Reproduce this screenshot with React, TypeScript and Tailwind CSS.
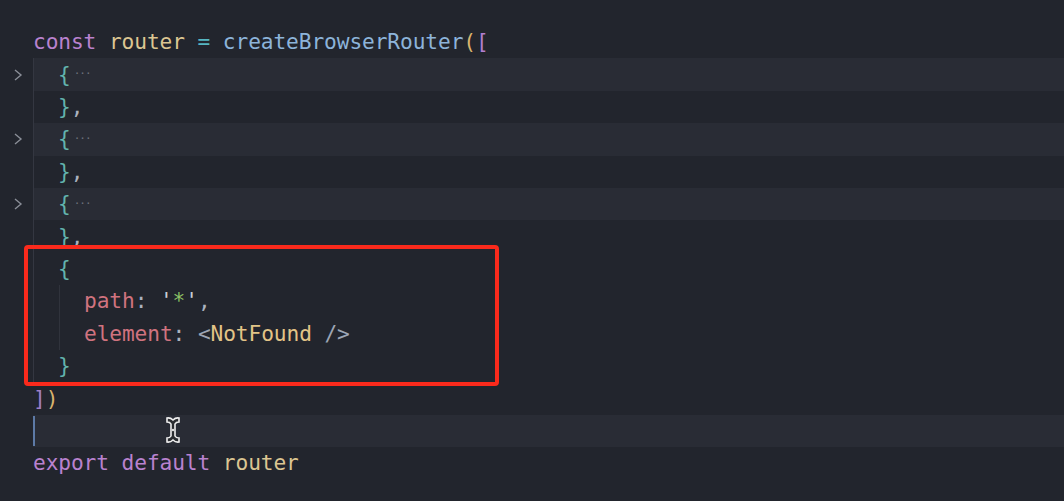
import type { ReactNode } from 'react';

const mono = { fontFamily: '"DejaVu Sans Mono", "Liberation Mono", monospace' };

function Chevron() {
  return (
    <svg width="10" height="14" viewBox="0 0 10 14" className="ml-[13px]">
      <polyline points="2,2 8,7 2,12" fill="none" stroke="#8a8e97" strokeWidth="1.4" />
    </svg>
  );
}

function Row({
  children,
  fold,
  guide,
  band,
}: {
  children?: ReactNode;
  fold?: boolean;
  guide?: boolean;
  band?: boolean;
}) {
  return (
    <div className="flex h-[32.4px] items-stretch">
      <div className="flex w-[33px] shrink-0 items-center">{fold && <Chevron />}</div>
      <div
        className={`flex flex-1 items-center whitespace-pre ${guide ? 'border-l border-[#343741]' : ''} ${
          band ? 'bg-[#292c35]' : ''
        }`}
      >
        {children}
      </div>
    </div>
  );
}

function Folded() {
  return (
    <>
      <span className="pl-[24px] text-[#62b4ae]">{'{'}</span>
      <span className="ml-[3px] text-[11px] tracking-[-1px] text-[#6d717a]">···</span>
    </>
  );
}

function Close() {
  return (
    <span className="pl-[24px]">
      <span className="text-[#62b4ae]">{'}'}</span>
      <span className="text-[#abb2bf]">,</span>
    </span>
  );
}

export default function App() {
  return (
    <div
      className="relative min-h-[501px] w-full bg-[#22252d] pt-[26px] text-[21.2px] tracking-[-0.1px]"
      style={mono}
    >
      <Row>
        <span className="text-[#b982cf]">const</span>
        <span> </span>
        <span className="text-[#dcc692]">router</span>
        <span className="text-[#56b6c2]"> = </span>
        <span className="text-[#8db4da]">createBrowserRouter</span>
        <span className="text-[#d8b46e]">(</span>
        <span className="text-[#b37fd0]">[</span>
      </Row>
      <Row fold guide band>
        <Folded />
      </Row>
      <Row guide>
        <Close />
      </Row>
      <Row fold guide band>
        <Folded />
      </Row>
      <Row guide>
        <Close />
      </Row>
      <Row fold guide band>
        <Folded />
      </Row>
      <Row guide>
        <Close />
      </Row>
      <Row guide>
        <span className="pl-[24px] text-[#62b4ae]">{'{'}</span>
      </Row>
      <Row guide>
        <div className="ml-[25px] flex h-full items-center border-l border-[#30333c] pl-[24px]">
          <span className="text-[#d0737f]">path</span>
          <span className="text-[#abb2bf]">: </span>
          <span className="text-[#c9ced6]">'</span>
          <span className="text-[#8cc265]">*</span>
          <span className="text-[#c9ced6]">'</span>
          <span className="text-[#abb2bf]">,</span>
        </div>
      </Row>
      <Row guide>
        <div className="ml-[25px] flex h-full items-center border-l border-[#30333c] pl-[24px]">
          <span className="text-[#d0737f]">element</span>
          <span className="text-[#abb2bf]">: </span>
          <span className="text-[#9da5b4]">&lt;</span>
          <span className="text-[#e2c487]">NotFound</span>
          <span className="text-[#9da5b4]"> /&gt;</span>
        </div>
      </Row>
      <Row guide>
        <span className="pl-[24px] text-[#62b4ae]">{'}'}</span>
      </Row>
      <Row>
        <span className="text-[#a07fc4]">]</span>
        <span className="text-[#d8b46e]">)</span>
      </Row>
      <Row band>
        <div className="h-[30px] w-[2px] bg-[#5d7aa6]" />
      </Row>
      <Row>
        <span className="text-[#b982cf]">export</span>
        <span> </span>
        <span className="text-[#b982cf]">default</span>
        <span> </span>
        <span className="text-[#dcc692]">router</span>
      </Row>

      {/* annotation box */}
      <div className="pointer-events-none absolute left-[24px] top-[245px] h-[141px] w-[475px] rounded-[4px] border-4 border-[#fb2a1c]" />

      {/* mouse I-beam */}
      <svg className="absolute left-[165px] top-[416px]" width="16" height="28" viewBox="0 0 16 28">
        <path
          d="M2 2 Q5.5 1.5 8 4 Q10.5 1.5 14 2 L14 6 Q11 6 10 8 L10 20 Q11 22 14 22 L14 26 Q10.5 26.5 8 24 Q5.5 26.5 2 26 L2 22 Q5 22 6 20 L6 8 Q5 6 2 6 Z"
          fill="#2a2c30"
          stroke="#eeeeee"
          strokeWidth="1.6"
        />
        <circle cx="8" cy="14" r="1.2" fill="#dddddd" />
      </svg>
    </div>
  );
}
